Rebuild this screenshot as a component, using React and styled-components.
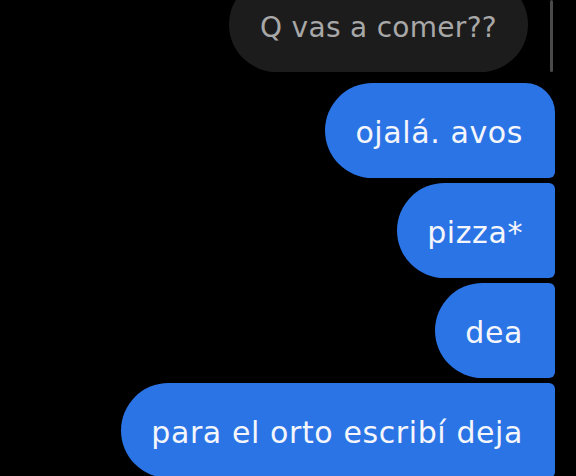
import styled, { createGlobalStyle } from "styled-components";

const GlobalStyle = createGlobalStyle`
  html, body {
    margin: 0;
    padding: 0;
    background: #000;
    overflow: hidden;
  }
  body {
    font-family: "DejaVu Sans", "Noto Sans", sans-serif;
  }
`;

const Screen = styled.div`
  position: relative;
  width: 576px;
  height: 476px;
  background: #000;
  overflow: hidden;
`;

const Thread = styled.div`
  display: flex;
  flex-direction: column;
  gap: 5px;
  margin-top: -23px;
  padding-right: 21px;
`;

const Row = styled.div`
  display: flex;
  justify-content: flex-end;
  padding-right: ${(p) => p.$inset || 0}px;
  margin-bottom: ${(p) => p.$after || 0}px;
`;

const Bubble = styled.div`
  height: 95px;
  display: flex;
  align-items: center;
  padding: 4px 32px 0 30px;
  box-sizing: border-box;
  font-size: 30px;
  letter-spacing: 0.6px;
  white-space: nowrap;
  color: #f4f6fb;
  background: #2a74e6;
  border-radius: ${(p) => p.$radius};
`;

const Received = styled(Bubble)`
  background: #1c1c1c;
  color: #a8a8a8;
  font-size: 28px;
  letter-spacing: 0.3px;
  padding: 6px 31px 0 31px;
  border-radius: 48px;
`;

const Scrollbar = styled.div`
  position: absolute;
  top: 0;
  left: 550px;
  width: 3px;
  height: 72px;
  border-radius: 2px;
  background: #4a4a4a;
`;

const sent = [
  { text: "ojalá. avos", radius: "48px 30px 6px 48px" },
  { text: "pizza*", radius: "48px 6px 6px 48px" },
  { text: "dea", radius: "48px 6px 6px 48px" },
  { text: "para el orto escribí deja", radius: "48px 6px 6px 48px" },
];

export default function App() {
  return (
    <Screen>
      <GlobalStyle />
      <Thread>
        <Row $inset={27} $after={6}>
          <Received>Q vas a comer??</Received>
        </Row>
        {sent.map((m) => (
          <Row key={m.text}>
            <Bubble $radius={m.radius}>{m.text}</Bubble>
          </Row>
        ))}
      </Thread>
      <Scrollbar />
    </Screen>
  );
}
